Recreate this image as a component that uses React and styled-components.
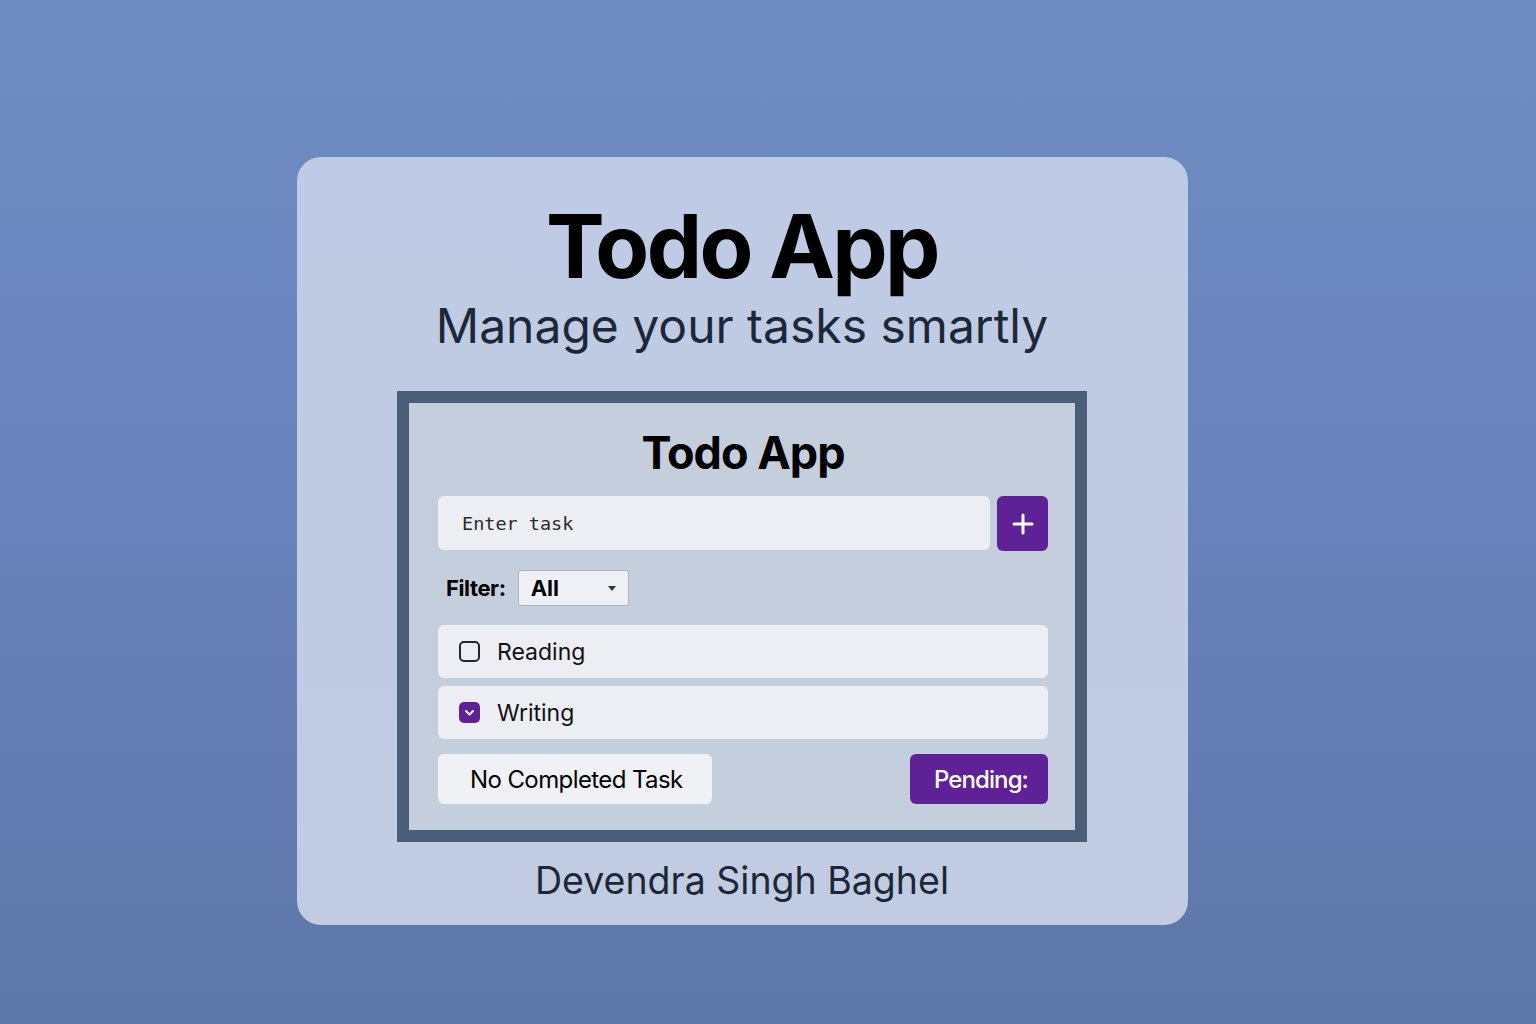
import React, { useState } from "react";
import styled, { createGlobalStyle } from "styled-components";

const GlobalStyle = createGlobalStyle`
  html, body {
    margin: 0;
    padding: 0;
  }
  body {
    font-family: Inter, "Noto Sans", "Liberation Sans", sans-serif;
    background: linear-gradient(180deg, #6f8dc3 0%, #6882bb 50%, #5e77a9 100%);
    min-height: 1024px;
  }
  * { box-sizing: border-box; }
`;

const Page = styled.div`
  width: 1536px;
  height: 1024px;
  display: flex;
  justify-content: center;
  padding-top: 157px;
  padding-right: 52px;
`;

const Card = styled.div`
  width: 891px;
  height: 768px;
  border-radius: 24px;
  background: linear-gradient(180deg, #bfcbe4 0%, #c1cce3 100%);
  display: flex;
  flex-direction: column;
  align-items: center;
  padding-top: 45px;
`;

const Title = styled.h1`
  margin: 0;
  font-size: 88px;
  line-height: 1;
  font-weight: 700;
  color: #000;
  letter-spacing: -2.6px;
`;

const Subtitle = styled.p`
  margin: 12px 0 0;
  font-size: 48px;
  line-height: 1;
  font-weight: 400;
  color: #1c2838;
`;

const Panel = styled.section`
  margin-top: 41px;
  width: 690px;
  border: 12px solid #4a5e78;
  background: #c5cedd;
  padding: 27px 27px 26px 29px;
  display: flex;
  flex-direction: column;
`;

const PanelTitle = styled.h2`
  margin: 0;
  text-align: center;
  font-size: 45px;
  line-height: 1;
  font-weight: 700;
  color: #000;
  letter-spacing: -1px;
`;

const InputRow = styled.div`
  margin-top: 21px;
  display: flex;
  gap: 7px;
  align-items: stretch;
`;

const TaskInput = styled.input`
  flex: 1;
  height: 54px;
  border: none;
  border-radius: 6px;
  background: #edeef3;
  padding: 0 24px;
  font-family: "DejaVu Sans Mono", "Liberation Mono", monospace;
  font-size: 18.5px;
  color: #222;
  outline: none;
  &::placeholder {
    color: #2a2a2a;
  }
`;

const AddButton = styled.button`
  width: 51px;
  height: 55px;
  border: none;
  border-radius: 6px;
  background: #5e2296;
  display: flex;
  align-items: center;
  justify-content: center;
  padding: 0;
  cursor: pointer;
`;

const FilterRow = styled.div`
  margin-top: 19px;
  display: flex;
  align-items: center;
  gap: 12px;
  padding-left: 8px;
`;

const FilterLabel = styled.span`
  font-size: 22px;
  font-weight: 700;
  color: #000;
  letter-spacing: -0.4px;
`;

const SelectBox = styled.div`
  width: 111px;
  height: 36px;
  border: 1px solid #a9b2c2;
  border-radius: 3px;
  background: #eef0f5;
  display: flex;
  align-items: center;
  justify-content: space-between;
  padding: 0 12px 0 12px;
  font-size: 22px;
  font-weight: 700;
  color: #000;
`;

const Caret = styled.span`
  width: 0;
  height: 0;
  border-left: 4px solid transparent;
  border-right: 4px solid transparent;
  border-top: 5px solid #333;
`;

const List = styled.ul`
  list-style: none;
  margin: 19px 0 0;
  padding: 0;
  display: flex;
  flex-direction: column;
  gap: 8px;
`;

const Item = styled.li`
  height: 53px;
  border-radius: 6px;
  background: #edeef3;
  display: flex;
  align-items: center;
  padding-left: 21px;
  gap: 17px;
  font-size: 23px;
  color: #111;
`;

const Check = styled.span`
  width: 21px;
  height: 21px;
  border-radius: 5px;
  border: ${(p) => (p.$checked ? "none" : "2px solid #1c2838")};
  background: ${(p) => (p.$checked ? "#5e2296" : "transparent")};
  display: flex;
  align-items: center;
  justify-content: center;
`;

const Footer = styled.div`
  margin-top: 15px;
  display: flex;
  justify-content: space-between;
`;

const GhostButton = styled.button`
  height: 50px;
  padding: 0 29px 0 32px;
  border: none;
  border-radius: 6px;
  background: #f0f1f5;
  font-family: inherit;
  font-size: 24px;
  color: #000;
  letter-spacing: -0.6px;
`;

const PrimaryButton = styled.button`
  height: 50px;
  padding: 0 20px 0 24px;
  border: none;
  border-radius: 6px;
  background: #5e2296;
  font-family: inherit;
  font-size: 24px;
  font-weight: 500;
  color: #fff;
  letter-spacing: -0.9px;
`;

const Author = styled.p`
  margin: 20px 0 0;
  font-size: 37.5px;
  line-height: 1;
  color: #1c2838;
`;

export default function App() {
  const [tasks] = useState([
    { id: 1, text: "Reading", done: false },
    { id: 2, text: "Writing", done: true },
  ]);
  return (
    <>
      <GlobalStyle />
      <Page>
        <Card>
          <Title>Todo App</Title>
          <Subtitle>Manage your tasks smartly</Subtitle>
          <Panel>
            <PanelTitle>Todo App</PanelTitle>
            <InputRow>
              <TaskInput placeholder="Enter task" />
              <AddButton aria-label="Add">
                <svg width="22" height="22" viewBox="0 0 22 22">
                  <path d="M11 2v18M2 11h18" stroke="#fff" strokeWidth="3" strokeLinecap="round" />
                </svg>
              </AddButton>
            </InputRow>
            <FilterRow>
              <FilterLabel>Filter:</FilterLabel>
              <SelectBox>
                All
                <Caret />
              </SelectBox>
            </FilterRow>
            <List>
              {tasks.map((t) => (
                <Item key={t.id}>
                  <Check $checked={t.done}>
                    {t.done && (
                      <svg width="11" height="8" viewBox="0 0 11 8">
                        <path d="M2 2l3.5 3.5L9 2" stroke="#fff" strokeWidth="1.8" fill="none" strokeLinecap="round" strokeLinejoin="round" />
                      </svg>
                    )}
                  </Check>
                  {t.text}
                </Item>
              ))}
            </List>
            <Footer>
              <GhostButton>No Completed Task</GhostButton>
              <PrimaryButton>Pending:</PrimaryButton>
            </Footer>
          </Panel>
          <Author>Devendra Singh Baghel</Author>
        </Card>
      </Page>
    </>
  );
}
